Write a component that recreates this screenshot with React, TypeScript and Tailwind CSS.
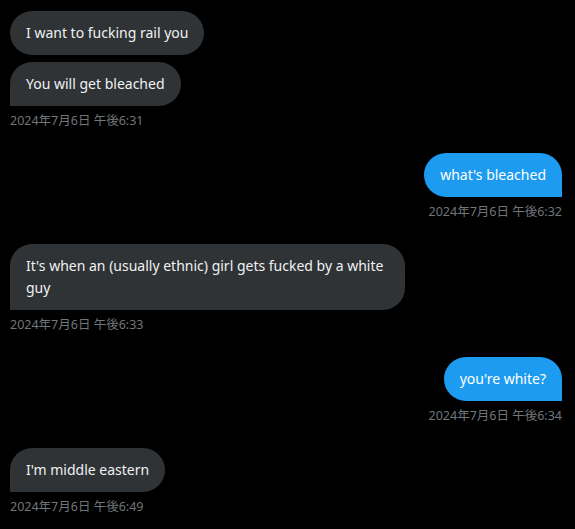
type Msg = {
  text: string;
  mine?: boolean;
  time?: string;
  tail?: boolean;
};

const messages: Msg[][] = [
  [
    { text: "I want to fucking rail you" },
    { text: "You will get bleached", tail: true, time: "2024年7月6日 午後6:31" },
  ],
  [{ text: "what's bleached", mine: true, tail: true, time: "2024年7月6日 午後6:32" }],
  [
    {
      text: "It's when an (usually ethnic) girl gets fucked by a white guy",
      tail: true,
      time: "2024年7月6日 午後6:33",
    },
  ],
  [{ text: "you're white?", mine: true, tail: true, time: "2024年7月6日 午後6:34" }],
  [{ text: "I'm middle eastern", tail: true, time: "2024年7月6日 午後6:49" }],
];

const Bubble = ({ text, mine, tail }: Msg) => {
  return (
    <div
      className={`max-w-[395px] rounded-[22px] px-4 py-[11px] text-[14px] leading-[22px] ${
        mine ? "bg-[#1d9bf0] text-white" : "bg-[#2f3336] text-[#eff1f2]"
      } ${tail ? (mine ? "rounded-br-none" : "rounded-bl-none") : ""}`}
    >
      {text}
    </div>
  );
};

export default function App() {
  return (
    <div
      className="w-[575px] h-[529px] bg-black pl-[10px] pr-[13px] pt-[11px] overflow-hidden"
      style={{ fontFamily: '"Noto Sans", "Noto Sans CJK JP", sans-serif' }}
    >
      <div className="flex flex-col gap-[25px]">
        {messages.map((group, gi) => (
          <div key={gi} className="flex flex-col gap-[7px]">
            {group.map((m, i) => (
              <div key={i} className={`flex flex-col ${m.mine ? "items-end" : "items-start"}`}>
                <Bubble {...m} />
                {m.time && (
                  <span className="mt-[7px] text-[12.5px] leading-[15px] text-[#71767b]">
                    {m.time}
                  </span>
                )}
              </div>
            ))}
          </div>
        ))}
      </div>
    </div>
  );
}
